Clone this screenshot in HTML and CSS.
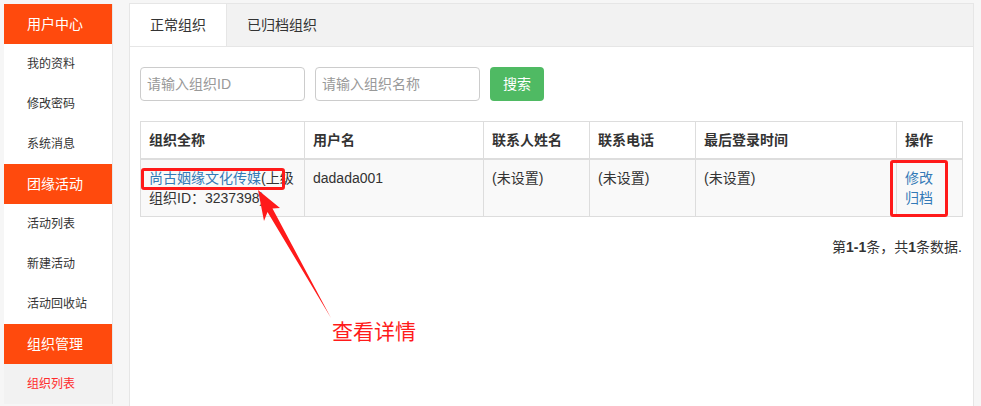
FILE: index.html
```html
<!DOCTYPE html>
<html lang="zh">
<head>
  <meta charset="UTF-8">
  <title>组织列表</title>
  <link rel="stylesheet" href="styles.css">
</head>
<body>

<div class="sidebar">
  <div class="side-head">用户中心</div>
  <a class="side-item" href="#">我的资料</a>
  <a class="side-item" href="#">修改密码</a>
  <a class="side-item" href="#">系统消息</a>
  <div class="side-head">团缘活动</div>
  <a class="side-item" href="#">活动列表</a>
  <a class="side-item" href="#">新建活动</a>
  <a class="side-item" href="#">活动回收站</a>
  <div class="side-head">组织管理</div>
  <a class="side-item active" href="#">组织列表</a>
</div>

<div class="panel">
  <div class="tabs">
    <a class="tab active" href="#">正常组织</a>
    <a class="tab" href="#">已归档组织</a>
  </div>
  <div class="panel-body">
    <form class="search">
      <input type="text" placeholder="请输入组织ID">
      <input type="text" placeholder="请输入组织名称">
      <button type="button" class="btn-search">搜索</button>
    </form>

    <table class="grid">
      <colgroup>
        <col class="c-name"><col class="c-user"><col class="c-contact"><col class="c-phone"><col class="c-time"><col class="c-op">
      </colgroup>
      <thead>
        <tr>
          <th>组织全称</th>
          <th>用户名</th>
          <th>联系人姓名</th>
          <th>联系电话</th>
          <th>最后登录时间</th>
          <th>操作</th>
        </tr>
      </thead>
      <tbody>
        <tr>
          <td><a href="#">尚古姻缘文化传媒</a>(上级组织ID：3237398)</td>
          <td>dadada001</td>
          <td>(未设置)</td>
          <td>(未设置)</td>
          <td>(未设置)</td>
          <td><a class="op" href="#">修改</a><a class="op" href="#">归档</a></td>
        </tr>
      </tbody>
    </table>
    <div class="summary">第<b>1-1</b>条，共<b>1</b>条数据.</div>
  </div>
</div>

<!-- 标注 -->
<div class="mark mark-name"></div>
<div class="mark mark-op"></div>
<svg class="arrow" width="981" height="406" viewBox="0 0 981 406">
  <polygon points="258,190 280,208 272.5,208.5 331,318 267.5,212 264,221" fill="#ff1a1a"/>
</svg>
<div class="mark-label">查看详情</div>

</body>
</html>
```

FILE: styles.css
```css
* { box-sizing: border-box; margin: 0; padding: 0; }
body {
  font-family: "Liberation Sans", "Noto Sans CJK SC", sans-serif;
  font-size: 14px;
  line-height: 20px;
  color: #333;
  background: #f6f6f6;
  display: flex;
  align-items: flex-start;
  gap: 16px;
  padding: 3px 8px 0 4px;
  height: 406px;
  overflow: hidden;
}
a { text-decoration: none; }

.sidebar {
  width: 109px;
  margin-top: 1px;
  background: #fff;
  border-right: 1px solid #e6e6e6;
  flex-shrink: 0;
}
.side-head {
  height: 40px;
  line-height: 40px;
  padding-left: 23px;
  background: #ff4a0d;
  color: #fff;
  font-size: 14px;
}
.side-item {
  display: block;
  height: 40px;
  line-height: 40px;
  padding-left: 23px;
  font-size: 12px;
  color: #333;
}
.side-item.active { background: #f2f2f2; color: #ff2b2b; }

.panel {
  flex: 1;
  height: 420px;
  background: #fff;
  border: 1px solid #e6e6e6;
}
.tabs {
  display: flex;
  height: 43px;
  background: #f2f2f2;
  border-bottom: 1px solid #e6e6e6;
}
.tab {
  padding: 11px 20px;
  line-height: 20px;
  color: #333;
  font-size: 14px;
}
.tab.active { background: #fff; border-right: 1px solid #e6e6e6; }

.panel-body { padding: 20px 10px; }
.search { display: flex; gap: 10px; margin-bottom: 20px; }
.search input {
  width: 165px;
  height: 34px;
  padding: 6px;
  font: inherit;
  border: 1px solid #ccc;
  border-radius: 4px;
  color: #555;
}
.search input::placeholder { color: #999; }
.btn-search {
  width: 54px;
  height: 34px;
  border: none;
  border-radius: 4px;
  background: #4fba63;
  color: #fff;
  font: inherit;
  cursor: pointer;
}

.grid {
  width: 100%;
  table-layout: fixed;
  border-collapse: collapse;
}
.c-name { width: 164px; }
.c-user { width: 179px; }
.c-contact { width: 106px; }
.c-phone { width: 106px; }
.c-time { width: 201px; }
.c-op { width: 66px; }
.grid th, .grid td {
  border: 1px solid #ddd;
  padding: 8px;
  text-align: left;
  vertical-align: top;
}
.grid th { font-weight: bold; border-bottom-width: 2px; }
.grid tbody tr { background: #f9f9f9; }
.grid a { color: #337ab7; }
.grid .op { display: block; }

.summary {
  margin-top: 20px;
  padding-right: 1px;
  text-align: right;
  font-size: 14px;
}

.mark {
  position: absolute;
  border: 3px solid #ff1a1a;
  border-radius: 3px;
}
.mark-name { left: 141px; top: 168px; width: 144px; height: 22px; }
.mark-op { left: 890px; top: 160px; width: 58px; height: 57px; }
.arrow { position: absolute; left: 0; top: 0; pointer-events: none; }
.mark-label {
  position: absolute;
  left: 332px;
  top: 319px;
  font-size: 21px;
  line-height: 26px;
  color: #ff1a1a;
}
```
